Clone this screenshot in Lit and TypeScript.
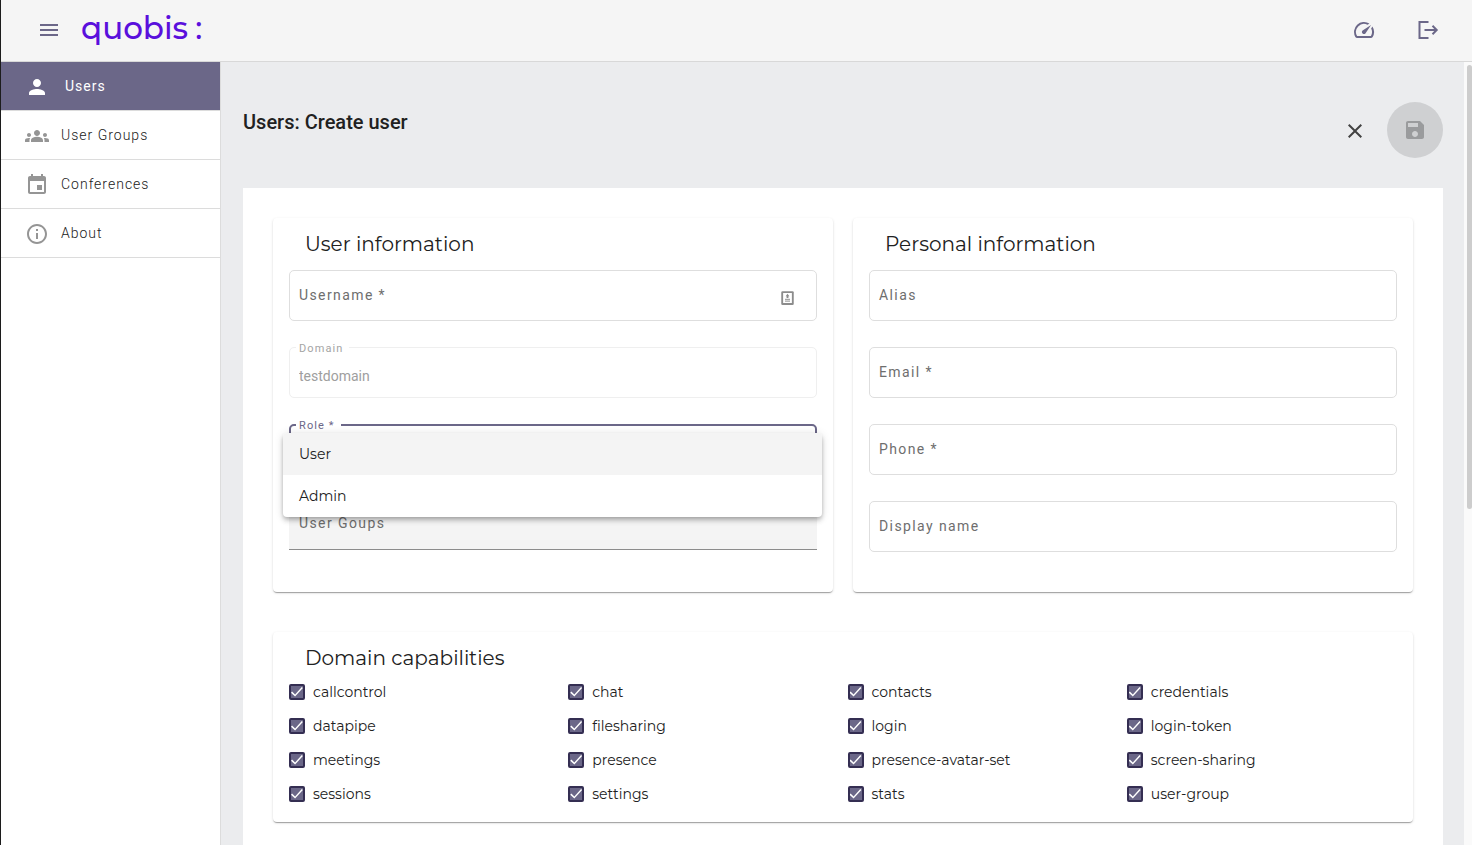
import { LitElement, html, svg, css } from "lit";
import { customElement, state } from "lit/decorators.js";
import { classMap } from "lit/directives/class-map.js";

const icons: Record<string, unknown> = {
  menu: svg`<path d="M3 18h18v-2H3v2zm0-5h18v-2H3v2zm0-7v2h18V6H3z"/>`,
  person: svg`<path d="M12 12c2.21 0 4-1.79 4-4s-1.79-4-4-4-4 1.79-4 4 1.79 4 4 4zm0 2c-2.67 0-8 1.34-8 4v2h16v-2c0-2.66-5.33-4-8-4z"/>`,
  groups: svg`<path d="M12 12.75c1.63 0 3.07.39 4.24.9 1.08.48 1.76 1.56 1.76 2.73V18H6v-1.61c0-1.18.68-2.26 1.76-2.73 1.17-.52 2.61-.91 4.24-.91zM4 13c1.100 0 2-.9 2-2s-.9-2-2-2-2 .9-2 2 .9 2 2 2zm1.130 1.100c-.37-.06-.74-.1-1.130-.1-.99 0-1.930.21-2.780.58C.48 14.900 0 15.620 0 16.430V18h4.500v-1.610c0-.83.23-1.610.63-2.290zM20 13c1.100 0 2-.9 2-2s-.9-2-2-2-2 .9-2 2 .9 2 2 2zm4 3.430c0-.81-.48-1.530-1.220-1.850-.85-.37-1.790-.58-2.780-.58-.39 0-.76.04-1.130.1.4.68.63 1.460.63 2.290V18H24v-1.570zM12 6c1.660 0 3 1.340 3 3s-1.340 3-3 3-3-1.340-3-3 1.340-3 3-3z"/>`,
  event: svg`<path d="M17 12h-5v5h5v-5zM16 1v2H8V1H6v2H5c-1.110 0-1.990.9-1.990 2L3 19c0 1.100.89 2 2 2h14c1.100 0 2-.9 2-2V5c0-1.100-.9-2-2-2h-1V1h-2zm3 18H5V8h14v11z"/>`,
  info: svg`<path d="M11 7h2v2h-2zm0 4h2v6h-2zm1-9C6.480 2 2 6.480 2 12s4.480 10 10 10 10-4.480 10-10S17.520 2 12 2zm0 18c-4.410 0-8-3.590-8-8s3.590-8 8-8 8 3.590 8 8-3.590 8-8 8z"/>`,
  gauge: svg`<path d="M20.380 8.570l-1.230 1.850a8 8 0 0 1-.22 7.580H5.070A8 8 0 0 1 15.580 6.850l1.850-1.230A10 10 0 0 0 3.350 19a2 2 0 0 0 1.720 1h13.850a2 2 0 0 0 1.740-1 10 10 0 0 0-.27-10.440zM10.590 15.410a2 2 0 0 0 2.830 0l5.660-8.490-8.490 5.660a2 2 0 0 0 0 2.830z"/>`,
  exit: svg`<path d="M12.500 4H3.500v16h9M8.500 12h12M16.500 7.800l4.200 4.200L16.500 16.200" fill="none" stroke="currentColor" stroke-width="2"/>`,
  close: svg`<path d="M19 6.410L17.590 5 12 10.590 6.410 5 5 6.410 10.590 12 5 17.590 6.410 19 12 13.410 17.590 19 19 17.590 13.410 12z"/>`,
  save: svg`<path d="M17 3H5c-1.110 0-2 .9-2 2v14c0 1.100.89 2 2 2h14c1.100 0 2-.9 2-2V7l-4-4zm-5 16c-1.660 0-3-1.340-3-3s1.340-3 3-3 3 1.340 3 3-1.340 3-3 3zm3-10H5V5h10v4z"/>`,
  autofill: svg`<rect x="2" y="1" width="20" height="22" rx="2" fill="#8c8c8c"/><rect x="5" y="4" width="14" height="16" fill="#fff"/><path d="M12 5l3 4h-1.500v3h-3V9H9z" fill="#8c8c8c"/><path d="M8 13h8v2H8zm0 3h8v2H8z" fill="#a5a5a5"/>`,
};

const icon = (name: string, size = "") =>
  html`<svg class="icon ${size}" viewBox="0 0 24 24" aria-hidden="true">${icons[name]}</svg>`;

const nav = [
  { label: "Users", icon: "person" },
  { label: "User Groups", icon: "groups" },
  { label: "Conferences", icon: "event" },
  { label: "About", icon: "info" },
];

const capabilities = [
  "callcontrol", "chat", "contacts", "credentials",
  "datapipe", "filesharing", "login", "login-token",
  "meetings", "presence", "presence-avatar-set", "screen-sharing",
  "sessions", "settings", "stats", "user-group",
];

const personalFields = [
  { id: "alias", label: "Alias" },
  { id: "email", label: "Email *" },
  { id: "phone", label: "Phone *" },
  { id: "display-name", label: "Display name" },
];

@customElement("app-root")
export class AppRoot extends LitElement {
  @state() private section = "Users";
  @state() private menuOpen = true;
  @state() private role = "";

  static styles = css`
    :host {
      --accent: #6b6788;
      --line: #dcdcdc;
      --display: Montserrat, Inter, sans-serif;
      display: flex;
      flex-direction: column;
      height: 100vh;
      box-sizing: border-box;
      border-left: 1px solid #1c1c1c;
      font-family: Roboto, sans-serif;
      color: #212121;
      background: #fff;
      overflow: hidden;
    }
    *, *::before { box-sizing: border-box; }
    button { border: 0; padding: 0; background: none; color: inherit; font: inherit; display: grid; place-items: center; }
    h1, h2 { margin: 0; }
    .icon { width: 24px; height: 24px; fill: currentColor; display: block; }
    .icon.tiny { width: 15px; height: 16px; }

    .topbar {
      flex: none;
      display: flex;
      align-items: center;
      height: 62px;
      padding: 0 32px 2px 36px;
      gap: 20px;
      background: #f5f5f5;
      border-bottom: 1px solid #d8d8d8;
      color: var(--accent);
    }
    .logo {
      display: flex;
      gap: 7px;
      margin-right: auto;
      padding-bottom: 4px;
      font: 500 31px/40px var(--display);
      color: #5a0fdc;
      text-decoration: none;
    }
    .topbar .tool + .tool { margin-left: 20px; }

    .body { flex: 1; display: flex; min-height: 0; }
    nav { flex: none; width: 220px; border-right: 1px solid var(--line); background: #fff; }
    nav a {
      display: flex;
      align-items: center;
      height: 49px;
      padding-left: 24px;
      gap: 12px;
      border-bottom: 1px solid var(--line);
      font-size: 14px;
      font-weight: 300;
      letter-spacing: 1px;
      color: #212121;
      text-decoration: none;
    }
    nav a .icon { margin-top: 2px; color: #959595; }
    nav a.current { background: var(--accent); color: #fff; gap: 16px; font-weight: 400; }
    nav a.current .icon { color: #fff; }

    main { flex: 1; min-width: 0; padding: 40px 21px 0 22px; background: #ebecee; overflow: hidden; }
    .heading { display: flex; align-items: flex-start; height: 86px; }
    h1 { flex: 1; font-size: 20px; line-height: 40px; font-weight: 500; }
    .close { width: 24px; height: 58px; margin-right: 20px; color: #424242; }
    .save { width: 56px; height: 56px; border-radius: 50%; background: #cfd0d2; color: #9a9b9d; }

    .scroll { flex: none; width: 8px; padding: 3px 0 0 3px; background: #fafafa; }
    .thumb { height: 444px; border-radius: 3px; background: #cdcdcd; }

    .panel { display: grid; gap: 40px; min-height: 100%; align-content: start; padding: 30px; background: #fff; }
    .pair { display: grid; grid-template-columns: 1fr 1fr; gap: 20px; }
    .card {
      padding: 9px 16px 11px;
      border-radius: 4px;
      background: #fff;
      box-shadow: 0 2px 1px -1px rgba(0,0,0,.2), 0 1px 1px rgba(0,0,0,.14), 0 1px 3px rgba(0,0,0,.12);
    }
    .pair .card { padding-bottom: 40px; }
    h2 { padding-left: 16px; font: 400 20px/34px var(--display); }
    .fields { display: grid; gap: 26px; padding-top: 9px; }
    .field { position: relative; height: 51px; }
    .field input, .field select {
      width: 100%;
      height: 51px;
      display: block;
      appearance: none;
      padding: 6px 9px 0;
      border: 1px solid #dedede;
      border-radius: 5px;
      outline: 0;
      background: #fff;
      font: 14px/20px Roboto, sans-serif;
      color: #212121;
    }
    .field label {
      position: absolute;
      left: 10px;
      top: 15px;
      font-size: 14px;
      line-height: 20px;
      letter-spacing: 0.1em;
      color: #6e6e6e;
      pointer-events: none;
    }
    .field input:focus + label, .field label.raised {
      left: 7px;
      top: -8px;
      padding: 0 6px 0 3px;
      font-size: 11px;
      line-height: 20px;
      background: #fff;
    }
    .field input:disabled { border-color: #efefef; color: #9e9e9e; }
    .field input:disabled + label { color: #a4a4a4; }
    .field select { border: 2px solid var(--accent); }
    .field label.active { color: var(--accent); }
    .field .autofill { position: absolute; right: 22px; top: 20px; color: #8c8c8c; }
    .field.filled { height: 49px; }
    .field.filled input { height: 49px; border: 0; border-bottom: 1px solid #8c8c8c; border-radius: 4px 4px 0 0; background: #f4f4f4; }
    .field.filled label { top: 12px; }

    .menu {
      position: absolute;
      z-index: 2;
      top: 9px;
      left: -6px;
      right: -5px;
      border-radius: 4px;
      overflow: hidden;
      background: #fff;
      box-shadow: 0 2px 4px -1px rgba(0,0,0,.2), 0 4px 5px rgba(0,0,0,.14), 0 1px 10px rgba(0,0,0,.12);
    }
    .menu button { width: 100%; height: 42px; padding: 0 16px; justify-items: start; font: 14px/20px var(--display); color: #212121; }
    .menu button.focused { background: #f4f4f4; }

    .caps { display: grid; grid-template-columns: repeat(4, 1fr); column-gap: 9px; }
    .caps label { display: flex; align-items: center; gap: 8px; height: 34px; font: 14px/20px var(--display); color: #212121; }
    .caps input {
      appearance: none;
      flex: none;
      display: grid;
      place-items: center;
      width: 16px;
      height: 16px;
      margin: 0;
      border: 2px solid #342e52;
      border-radius: 2px;
    }
    .caps input:checked { background: var(--accent); }
    .caps input:checked::before {
      content: "";
      width: 12px;
      height: 12px;
      background: #fff;
      clip-path: polygon(0 56%, 9% 46%, 34% 70%, 90% 8%, 99% 17%, 34% 88%);
    }
  `;

  private pickRole(role: string) {
    this.role = role;
    this.menuOpen = false;
  }

  render() {
    return html`
      <header class="topbar">
        <button aria-label="Toggle menu">${icon("menu")}</button>
        <a class="logo" href="#"><span>quobis</span><span>:</span></a>
        <button class="tool" aria-label="Dashboard">${icon("gauge")}</button>
        <button class="tool" aria-label="Log out">${icon("exit")}</button>
      </header>
      <div class="body">
        <nav>
          ${nav.map((item) => html`
            <a href="#" class=${classMap({ current: item.label === this.section })}
              @click=${() => (this.section = item.label)}>${icon(item.icon)}<span>${item.label}</span></a>`)}
        </nav>
        <main>
          <div class="heading">
            <h1>Users: Create user</h1>
            <button class="close" aria-label="Close">${icon("close")}</button>
            <button class="save" aria-label="Save" disabled>${icon("save")}</button>
          </div>
          <form class="panel">
            <div class="pair">
              <section class="card">
                <h2>User information</h2>
                <div class="fields">
                  <div class="field">
                    <input id="username" required />
                    <label for="username">Username *</label>
                    <span class="autofill">${icon("autofill", "tiny")}</span>
                  </div>
                  <div class="field">
                    <input id="domain" value="testdomain" disabled />
                    <label class="raised" for="domain">Domain</label>
                  </div>
                  <div class="field">
                    <select id="role" .value=${this.role}>
                      <option value=""></option>
                      <option value="User">User</option>
                      <option value="Admin">Admin</option>
                    </select>
                    <label class="raised active" for="role">Role *</label>
                    ${this.menuOpen ? html`
                      <div class="menu">
                        <button type="button" class="focused" @click=${() => this.pickRole("User")}>User</button>
                        <button type="button" @click=${() => this.pickRole("Admin")}>Admin</button>
                      </div>` : null}
                  </div>
                  <div class="field filled">
                    <input id="groups" />
                    <label for="groups">User Goups</label>
                  </div>
                </div>
              </section>
              <section class="card">
                <h2>Personal information</h2>
                <div class="fields">
                  ${personalFields.map((f) => html`
                    <div class="field">
                      <input id=${f.id} />
                      <label for=${f.id}>${f.label}</label>
                    </div>`)}
                </div>
              </section>
            </div>
            <section class="card">
              <h2>Domain capabilities</h2>
              <div class="caps">
                ${capabilities.map((c) => html`<label><input type="checkbox" checked />${c}</label>`)}
              </div>
            </section>
          </form>
        </main>
        <div class="scroll"><div class="thumb"></div></div>
      </div>
    `;
  }
}
